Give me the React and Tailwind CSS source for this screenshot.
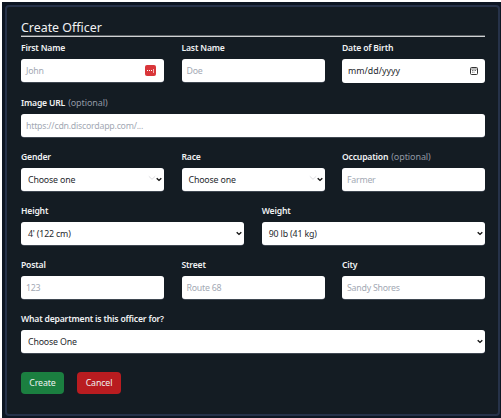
import React from "react";

function Chevron({ className = "" }) {
  return (
    <svg className={className} width="6" height="5" viewBox="0 0 6 5" fill="none">
      <path d="M0.7 1.2 L3 3.4 L5.3 1.2" stroke="#111" strokeWidth="1.4" />
    </svg>
  );
}

function FaintChevron() {
  return (
    <svg className="-mt-[3px]" width="8" height="6" viewBox="0 0 8 6" fill="none">
      <path d="M0.8 1.3 L4 4.3 L7.2 1.3" stroke="#d4d4d8" strokeWidth="0.8" />
    </svg>
  );
}

function Field({ label, optional, children }) {
  return (
    <div className="flex min-w-0 flex-col gap-[5px]">
      <label className="flex h-3 items-center gap-[3px] whitespace-nowrap text-[8.6px] font-semibold tracking-[-0.18px] text-[#f1f2f3]">
        <span>{label}</span>
        {optional && <span className="text-[9px] font-normal tracking-[-0.08px] text-[#9198a3]">(optional)</span>}
      </label>
      {children}
    </div>
  );
}

function TextBox({ text, children }) {
  return (
    <div className="flex h-[23px] items-center justify-between rounded-[3px] bg-white pl-[5px] pr-2 shadow-[0_0.5px_0_0_#6b7280] text-[#a3a9b4]">
      <span className="whitespace-nowrap">{text}</span>
      {children}
    </div>
  );
}

function SelectBox({ text, faint }) {
  return (
    <div className="flex h-[23px] items-center justify-between rounded-[3px] bg-white pl-[7px] pr-[2px] shadow-[0_0.5px_0_0_#6b7280] text-[#26292e]">
      <span className="whitespace-nowrap tracking-[-0.16px]">{text}</span>
      <span className="flex items-center">
        {faint && <FaintChevron />}
        <Chevron />
      </span>
    </div>
  );
}

export default function App() {
  return (
    <div className="h-[418px] w-[501px] overflow-hidden bg-white pl-[2px] pt-[2px] font-['Noto_Sans',sans-serif] text-[8.8px] leading-3 tracking-[-0.24px]">
      <div className="h-full bg-[#0d1623] pl-[3px] pt-[3px]">
        <main className="h-[411px] w-[495px] rounded-[4px] border-2 border-[#263249] bg-[#141c23] pl-[14px] pr-[13px]">
          <h1 className="flex h-[30px] items-end border-b border-[#d0d2d4] pb-px text-[12.4px] leading-[15px] tracking-normal text-[#f1f2f3] shadow-[inset_0_-1px_0_0_#5d6266]">
            Create Officer
          </h1>
          <form className="flex flex-col gap-[14px] pt-[5px]">
            <div className="mb-px grid h-10 grid-cols-3 gap-[17.5px]">
              <Field label="First Name">
                <TextBox text="John">
                  <span className="flex h-[11px] w-[11px] items-center justify-center gap-px rounded-[2px] bg-[#d9363a]">
                    <i className="h-px w-px bg-white" />
                    <i className="h-px w-px bg-white" />
                    <i className="h-px w-px bg-white" />
                    <i className="h-1 w-px bg-[#f3b5b7]" />
                  </span>
                </TextBox>
              </Field>
              <Field label="Last Name">
                <TextBox text="Doe" />
              </Field>
              <Field label="Date of Birth">
                <div className="flex h-6 shrink-0 items-center justify-between rounded-[3px] bg-white pl-[6px] pr-[7px] text-[#26292e]">
                  <span className="tracking-[0.02px]">mm/dd/yyyy</span>
                  <svg width="8" height="8" viewBox="0 0 8 8" fill="none">
                    <rect x="0.5" y="0.5" width="7" height="7" rx="1" stroke="#333" />
                    <path d="M1 2h6M2 3.5h1M3.5 3.5h1M5 3.5h1M2 5.2h1M3.5 5.2h1" stroke="#555" strokeWidth="0.8" />
                  </svg>
                </div>
              </Field>
            </div>
            <Field label="Image URL" optional>
              <TextBox text="https://cdn.discordapp.com/..." />
            </Field>
            <div className="grid h-10 grid-cols-3 gap-[17.5px]">
              <Field label="Gender">
                <SelectBox text="Choose one" faint />
              </Field>
              <Field label="Race">
                <SelectBox text="Choose one" faint />
              </Field>
              <Field label="Occupation" optional>
                <TextBox text="Farmer" />
              </Field>
            </div>
            <div className="grid h-10 grid-cols-2 gap-[17.5px]">
              <Field label="Height">
                <SelectBox text="4' (122 cm)" />
              </Field>
              <Field label="Weight">
                <SelectBox text="90 lb (41 kg)" />
              </Field>
            </div>
            <div className="grid h-10 grid-cols-3 gap-[17.5px]">
              <Field label="Postal">
                <TextBox text="123" />
              </Field>
              <Field label="Street">
                <TextBox text="Route 68" />
              </Field>
              <Field label="City">
                <TextBox text="Sandy Shores" />
              </Field>
            </div>
            <Field label="What department is this officer for?">
              <SelectBox text="Choose One" />
            </Field>
            <div className="flex gap-[13px] pt-[5px] tracking-[-0.12px] text-[#eef2f0]">
              <button type="button" className="h-[22px] w-[43px] rounded-[4px] bg-[#1b7f40]">
                Create
              </button>
              <button type="button" className="h-[22px] w-11 rounded-[4px] bg-[#b91c20]">
                Cancel
              </button>
            </div>
          </form>
        </main>
      </div>
    </div>
  );
}
